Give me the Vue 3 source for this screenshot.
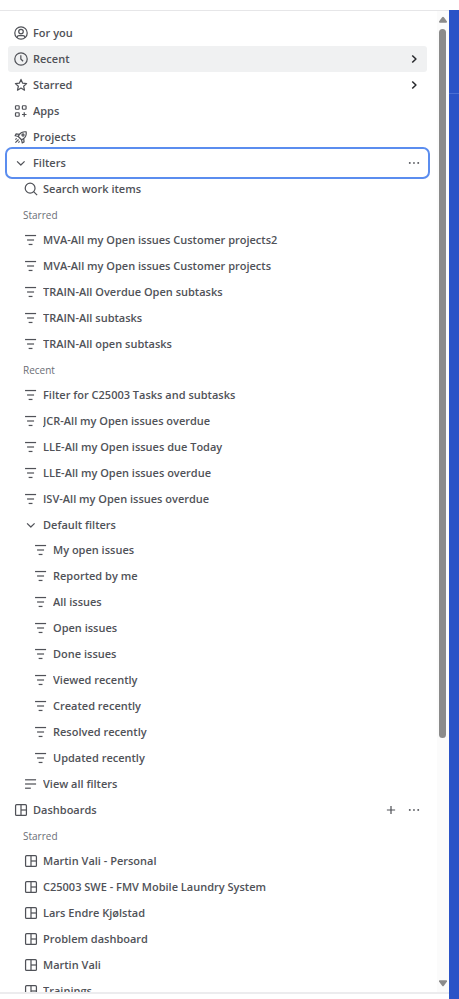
<template>
  <div class="page">
    <div class="top-bar"></div>

    <div class="main">
      <div class="sidebar">
        <div class="sidebar-body">
          <nav class="nav" aria-label="Sidebar">
            <template v-for="(item, index) in items" :key="index">
              <h2 v-if="item.heading" class="heading">{{ item.heading }}</h2>

              <div
                v-else
                class="row"
                :class="[`level-${item.level || 0}`, { selected: item.selected, focused: item.focused, compact: item.compact }]"
              >
                <button v-if="item.toggle" class="row-main" type="button" :aria-expanded="item.toggle === 'open'">
                  <svg class="icon" viewBox="0 0 16 16" aria-hidden="true">
                    <path v-for="d in icons[item.icon]" :key="d" :d="d" />
                  </svg>
                  <span class="label">{{ item.label }}</span>
                  <svg v-if="item.toggle === 'flyout'" class="icon arrow" viewBox="0 0 16 16" aria-hidden="true">
                    <path d="M6 4l4.2 4L6 12" />
                  </svg>
                </button>
                <a v-else class="row-main" href="#">
                  <svg class="icon" viewBox="0 0 16 16" aria-hidden="true">
                    <path v-for="d in icons[item.icon]" :key="d" :d="d" />
                  </svg>
                  <span class="label">{{ item.label }}</span>
                </a>

                <div v-if="item.actions" class="actions">
                  <button
                    v-for="action in item.actions"
                    :key="action"
                    class="action"
                    type="button"
                    :aria-label="action === 'add' ? 'Create' : 'More actions'"
                  >
                    <svg class="icon" :class="action" viewBox="0 0 16 16" aria-hidden="true">
                      <path v-for="d in icons[action]" :key="d" :d="d" />
                    </svg>
                  </button>
                </div>
              </div>
            </template>
          </nav>

          <div class="scrollbar" aria-hidden="true">
            <svg class="scroll-arrow" viewBox="0 0 12 18">
              <path d="M5.1 6.2L2 10.6Q1.6 11.7 2.8 11.7H9.2Q10.4 11.7 10 10.6L6.9 6.2Q6 5.2 5.1 6.2z" />
            </svg>
            <div class="scroll-track">
              <div class="scroll-thumb"></div>
            </div>
            <svg class="scroll-arrow" viewBox="0 0 12 18">
              <path d="M5.1 11.8L2 7.4Q1.6 6.3 2.8 6.3H9.2Q10.4 6.3 10 7.4L6.9 11.8Q6 12.8 5.1 11.8z" />
            </svg>
          </div>
        </div>
        <div class="sidebar-footer"></div>
      </div>

      <div class="board">
        <div class="board-header"></div>
      </div>
    </div>
  </div>
</template>

<script setup>
const icons = {
  person: [
    'M8 .9a7.1 7.1 0 1 1 0 14.2A7.1 7.1 0 0 1 8 .9z',
    'M8 3.8a2.6 2.6 0 1 1 0 5.2 2.6 2.6 0 0 1 0-5.2z',
    'M3.8 13.4v-.6c0-1 .8-1.8 1.8-1.8h4.8c1 0 1.8.8 1.8 1.8v.6'
  ],
  clock: ['M8 .9a7.1 7.1 0 1 1 0 14.2A7.1 7.1 0 0 1 8 .9z', 'M7.8 3.8V8l2.6 2.6'],
  star: ['M8 1.6l1.9 4.3 4.5.5-3.4 3 1 4.5L8 11.5l-4 2.4 1-4.5-3.4-3 4.5-.5z'],
  apps: [
    'M2.5 2h2.6q.8 0 .8.8v2.4q0 .8-.8.8H2.5q-.8 0-.8-.8V2.8q0-.8.8-.8z',
    'M10.4 2h2.6q.8 0 .8.8v2.4q0 .8-.8.8h-2.6q-.8 0-.8-.8V2.8q0-.8.8-.8z',
    'M2.5 10h2.6q.8 0 .8.8v2.4q0 .8-.8.8H2.5q-.8 0-.8-.8v-2.4q0-.8.8-.8z',
    'M11.7 9.4v5.2M9.1 12h5.2'
  ],
  rocket: [
    'M13.9 2.1c-3.6-.5-5.9.4-8 3.2L4.9 7.4 8.6 11.1l2.1-1c2.8-2.1 3.7-4.4 3.2-8z',
    'M6.2 4.9L2.3 4.5 1.3 6.6l3.8.8M11.1 9.8l.4 3.9-2.1 1-.8-3.8',
    'M5.2 10.8l-3.6 3.6M3 9.6l-1.4 1.4M6.4 13l-1.4 1.4',
    'M10.3 4.5a1.2 1.2 0 1 1 0 2.4 1.2 1.2 0 0 1 0-2.4z'
  ],
  chevronDown: ['M3.5 6.1L7.8 10.3 12.1 6.1'],
  search: ['M7 1.4a5.6 5.6 0 1 1 0 11.2A5.6 5.6 0 0 1 7 1.4z', 'M11 11l4 4'],
  filter: ['M1.2 2.9h12.6', 'M3.5 8h8', 'M5.3 13.1h4.4'],
  lines: ['M1.2 3.2h12.6', 'M1.2 8h12.6', 'M1.2 12.8h6.6'],
  board: [
    'M3 1.8h10q1.2 0 1.2 1.2v10q0 1.2-1.2 1.2H3q-1.2 0-1.2-1.2V3q0-1.2 1.2-1.2z',
    'M8 1.8v12.4',
    'M8 8h6.2'
  ],
  add: ['M8 3.3v9.4M3.3 8h9.4'],
  more: ['M2.2 7h1.9v1.9H2.2z', 'M7 7h1.9v1.9H7z', 'M11.9 7h1.9v1.9h-1.9z']
}

const starredFilters = [
  'MVA-All my Open issues Customer projects2',
  'MVA-All my Open issues Customer projects',
  'TRAIN-All Overdue Open subtasks',
  'TRAIN-All subtasks',
  'TRAIN-All open subtasks'
]

const recentFilters = [
  'Filter for C25003 Tasks and subtasks',
  'JCR-All my Open issues overdue',
  'LLE-All my Open issues due Today',
  'LLE-All my Open issues overdue',
  'ISV-All my Open issues overdue'
]

const defaultFilters = [
  'My open issues',
  'Reported by me',
  'All issues',
  'Open issues',
  'Done issues',
  'Viewed recently',
  'Created recently',
  'Resolved recently',
  'Updated recently'
]

const dashboards = [
  'Martin Vali - Personal',
  'C25003 SWE - FMV Mobile Laundry System',
  'Lars Endre Kjølstad',
  'Problem dashboard',
  'Martin Vali',
  'Trainings'
]

function toRows(labels, icon, level) {
  return labels.map(label => ({ label, icon, level }))
}

const items = [
  { label: 'For you', icon: 'person' },
  { label: 'Recent', icon: 'clock', toggle: 'flyout', selected: true },
  { label: 'Starred', icon: 'star', toggle: 'flyout' },
  { label: 'Apps', icon: 'apps' },
  { label: 'Projects', icon: 'rocket' },
  { label: 'Filters', icon: 'chevronDown', toggle: 'open', focused: true, actions: ['more'] },
  { label: 'Search work items', icon: 'search', level: 1 },
  { heading: 'Starred' },
  ...toRows(starredFilters, 'filter', 1),
  { heading: 'Recent' },
  ...toRows(recentFilters, 'filter', 1),
  { label: 'Default filters', icon: 'chevronDown', level: 1, toggle: 'open', compact: true },
  ...toRows(defaultFilters, 'filter', 2),
  { label: 'View all filters', icon: 'lines', level: 1 },
  { label: 'Dashboards', icon: 'board', actions: ['add', 'more'] },
  { heading: 'Starred' },
  ...toRows(dashboards, 'board', 1)
]
</script>

<style>
body {
  margin: 0;
}
</style>

<style scoped>
.page {
  display: flex;
  flex-direction: column;
  height: 100vh;
  background: #fff;
  color: #505258;
  font-family: "Open Sans", "Noto Sans", sans-serif;
  font-size: 11px;
  font-weight: 600;
}

.top-bar {
  flex: none;
  height: 10px;
}

.main {
  display: flex;
  flex: 1;
  min-height: 0;
}

.sidebar {
  display: flex;
  flex: 1;
  flex-direction: column;
  min-width: 0;
  border-top: 1px solid #e6e6e8;
}

.sidebar-body {
  display: flex;
  flex: 1;
  min-height: 0;
}

.sidebar-footer {
  flex: none;
  height: 5px;
  border-top: 2px solid #ececee;
}

.nav {
  flex: 1;
  min-width: 0;
  padding: 9px 10px 0 8px;
  overflow: hidden;
}

.heading {
  height: 25px;
  margin: 0;
  padding-left: 15px;
  color: #6b6e76;
  font-size: 10px;
  font-weight: 400;
  line-height: 26px;
}

.row {
  display: flex;
  height: 26px;
  border-radius: 3px;
}

.row.compact {
  height: 25px;
}

.row.selected {
  background: #f0f1f2;
}

/* Keyboard focus ring */
.row.focused {
  outline: 2px solid #5b8def;
  outline-offset: 1px;
  border-radius: 4px;
}

.row-main {
  display: flex;
  flex: 1;
  align-items: center;
  gap: 5px;
  min-width: 0;
  padding: 0 6px;
  border: none;
  background: transparent;
  color: inherit;
  font: inherit;
  text-align: left;
  text-decoration: none;
  cursor: pointer;
}

.level-1 .row-main {
  padding-left: 16px;
}

.level-2 .row-main {
  padding-left: 26px;
}

.label {
  flex: 1;
  overflow: hidden;
  line-height: 20px;
  white-space: nowrap;
  text-overflow: ellipsis;
}

.icon {
  display: block;
  flex: none;
  width: 14px;
  height: 14px;
  fill: none;
  stroke: currentColor;
  stroke-width: 1.4;
  stroke-linejoin: round;
}

.icon.arrow {
  color: #292a2e;
  stroke-width: 1.8;
}

.icon.more {
  fill: currentColor;
  stroke: none;
}

.actions {
  display: flex;
  align-items: center;
  gap: 9px;
  padding-right: 6px;
}

.action {
  padding: 0;
  border: none;
  background: transparent;
  color: inherit;
  cursor: pointer;
}

/* Scrollbar */
.scrollbar {
  display: flex;
  flex: none;
  flex-direction: column;
  width: 12px;
  background: #fbfbfb;
}

.scroll-arrow {
  flex: none;
  width: 12px;
  height: 18px;
  fill: #8b8b8b;
}

.scroll-track {
  flex: 1;
  padding: 0 3px 0 2px;
}

.scroll-thumb {
  height: 75%;
  border-radius: 4px;
  background: #8b8b8b;
}

/* Board visible behind the sidebar */
.board {
  flex: none;
  width: 10px;
  background: #2a53c7;
}

.board-header {
  height: 83px;
  border-bottom: 1px solid #4a6fd4;
}
</style>
